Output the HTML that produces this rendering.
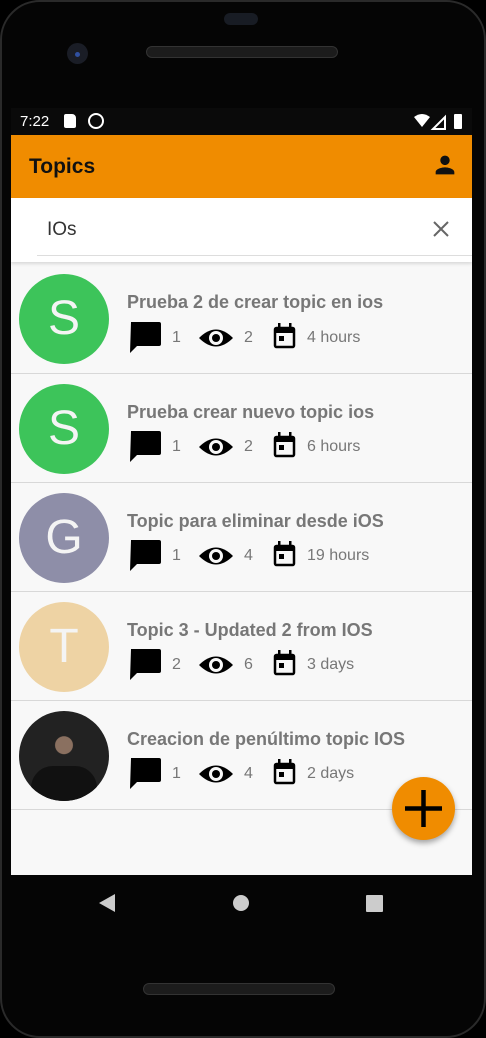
<!DOCTYPE html>
<html><head><style>
*{margin:0;padding:0;box-sizing:border-box}
body{width:486px;height:1038px;background:#000;position:relative;overflow:hidden;font-family:"Liberation Sans",sans-serif}
.phone{position:absolute;left:0;top:0;width:486px;height:1038px;border-radius:40px;background:#050505;border:2px solid #2a2a2a}
.screen{position:absolute;left:11px;top:108px;width:461px;height:767px;background:#f8f8f8;overflow:hidden}
.status{height:27px;background:#0a0a0a;color:#fff;font-size:15px;position:relative}
.appbar{height:63px;background:#f08c00;position:relative}
.appbar .t{position:absolute;left:18px;top:20px;font-size:21px;font-weight:bold;color:#111}
.search{height:64px;background:#fff;position:relative;box-shadow:0 2px 3px rgba(0,0,0,.12)}
.search .q{position:absolute;left:36px;top:21px;font-size:19px;color:#333}
.search .line{position:absolute;left:26px;right:0;top:57px;height:1px;background:#ddd}
.row{position:absolute;left:0;width:461px;height:110px;border-bottom:1px solid #d8d8d8}
.av{position:absolute;left:8px;top:10px;width:90px;height:90px;border-radius:50%;color:#f4f4f4;font-size:48px;text-align:center;line-height:90px}
.ti{position:absolute;left:116px;top:28px;font-size:18px;font-weight:bold;color:#777;white-space:nowrap}
.n span{position:absolute;white-space:nowrap}
.fab{position:absolute;left:392px;top:777px;width:63px;height:63px;border-radius:50%;background:#f08c00;box-shadow:0 3px 6px rgba(0,0,0,.35)}
</style></head><body>
<div class="phone"></div>
<div style="position:absolute;left:224px;top:13px;width:34px;height:12px;border-radius:6px;background:#181c24"></div>
<div style="position:absolute;left:67px;top:43px;width:21px;height:21px;border-radius:50%;background:#1a1d26"><div style="position:absolute;left:8px;top:9px;width:5px;height:5px;border-radius:50%;background:#3050a0"></div></div>
<div style="position:absolute;left:146px;top:46px;width:192px;height:12px;border-radius:6px;background:#1c1c1c;border:1px solid #333"></div>
<div style="position:absolute;left:143px;top:983px;width:192px;height:12px;border-radius:6px;background:#1c1c1c;border:1px solid #333"></div>
<div class="screen">
 <div class="status"><span style="position:absolute;left:9px;top:5px">7:22</span>
  <div style="position:absolute;left:53px;top:6px;width:12px;height:14px;background:#fff;border-radius:2px 4px 2px 2px"></div>
  <div style="position:absolute;left:77px;top:5px;width:16px;height:16px;border:2.5px solid #fff;border-radius:50%"></div>
  <svg style="position:absolute;left:403px;top:5px" width="50" height="17"><path d="M0 4 Q8 -2 16 4 L8 14Z" fill="#fff"/><path d="M19 16 L31 4 L31 16Z" fill="none" stroke="#fff" stroke-width="2"/><rect x="40" y="1" width="8" height="15" rx="1" fill="#fff"/></svg>
 </div>
 <div class="appbar"><div class="t">Topics</div>
  <svg style="position:absolute;left:420px;top:16px" width="28" height="28" viewBox="0 0 24 24"><path d="M12 12c2.2 0 4-1.8 4-4s-1.8-4-4-4-4 1.8-4 4 1.8 4 4 4zm0 2c-2.7 0-8 1.3-8 4v2h16v-2c0-2.7-5.3-4-8-4z" fill="#111"/></svg>
 </div>
 <div class="search"><div class="q">IOs</div>
  <svg style="position:absolute;left:420px;top:21px" width="20" height="20"><path d="M3 3L17 17M17 3L3 17" stroke="#666" stroke-width="2"/></svg>
  <div class="line"></div></div>
</div>
<div style="position:absolute;left:11px;top:264px;width:461px">
 <div class="row" style="top:0;height:110px"><div class="av" style="background:#3dc45a">S</div><div class="ti">Prueba 2 de crear topic en ios</div></div>
 <div class="row" style="top:110px;height:109px"><div class="av" style="background:#3dc45a">S</div><div class="ti">Prueba crear nuevo topic ios</div></div>
 <div class="row" style="top:219px;height:109px"><div class="av" style="background:#8e8ea8">G</div><div class="ti">Topic para eliminar desde iOS</div></div>
 <div class="row" style="top:328px;height:109px"><div class="av" style="background:#eed3a4">T</div><div class="ti">Topic 3 - Updated 2 from IOS</div></div>
 <div class="row" style="top:437px;height:109px"><div class="av" style="background:radial-gradient(circle at 50% 38%,#8a7060 0 12%,#222 13% 100%);overflow:hidden"><div style="position:absolute;left:12px;top:55px;width:66px;height:40px;background:#111;border-radius:22px 22px 0 0"></div></div><div class="ti">Creacion de penúltimo topic IOS</div></div>
</div>
<svg width="0" height="0" style="position:absolute"><defs><g id="m">
<path d="M2 0h28a2 2 0 0 1 2 2v20a2 2 0 0 1-2 2H8l-7 7z" fill="#000"/>
<path d="M70 16 Q87 -1 104 16 Q87 33 70 16Z" fill="#000"/><circle cx="87" cy="16" r="7" fill="#f8f8f8"/><circle cx="87" cy="16" r="4" fill="#000"/>
<rect x="146" y="6" width="19" height="19" rx="1.5" fill="none" stroke="#000" stroke-width="2.5"/><rect x="146" y="6" width="19" height="5" fill="#000"/><rect x="149" y="1" width="2.5" height="6" fill="#000"/><rect x="160" y="1" width="2.5" height="6" fill="#000"/><rect x="150" y="14" width="5" height="5" fill="#000"/>
</g></defs></svg>
<svg style="position:absolute;left:129px;top:322px" width="200" height="34"><use href="#m"/></svg>
<svg style="position:absolute;left:129px;top:431px" width="200" height="34"><use href="#m"/></svg>
<svg style="position:absolute;left:129px;top:540px" width="200" height="34"><use href="#m"/></svg>
<svg style="position:absolute;left:129px;top:649px" width="200" height="34"><use href="#m"/></svg>
<svg style="position:absolute;left:129px;top:758px" width="200" height="34"><use href="#m"/></svg>
<div class="n" style="position:absolute;font-size:16px;color:#777;left:0;top:0">
<span style="left:172px;top:329px">1</span><span style="left:244px;top:329px">2</span><span style="left:307px;top:329px">4 hours</span>
<span style="left:172px;top:438px">1</span><span style="left:244px;top:438px">2</span><span style="left:307px;top:438px">6 hours</span>
<span style="left:172px;top:547px">1</span><span style="left:244px;top:547px">4</span><span style="left:307px;top:547px">19 hours</span>
<span style="left:172px;top:656px">2</span><span style="left:244px;top:656px">6</span><span style="left:307px;top:656px">3 days</span>
<span style="left:172px;top:765px">1</span><span style="left:244px;top:765px">4</span><span style="left:307px;top:765px">2 days</span>
</div>
<div class="fab"><svg width="63" height="63"><path d="M31.5 13v37M13 31.5h37" stroke="#000" stroke-width="4.5"/></svg></div>
<svg style="position:absolute;left:0;top:890px" width="486" height="30">
<path d="M115 4L115 22L99 13Z" fill="#ccc"/><circle cx="241" cy="13" r="8" fill="#ccc"/><rect x="366" y="5" width="17" height="17" rx="1" fill="#ccc"/></svg>
</body></html>
